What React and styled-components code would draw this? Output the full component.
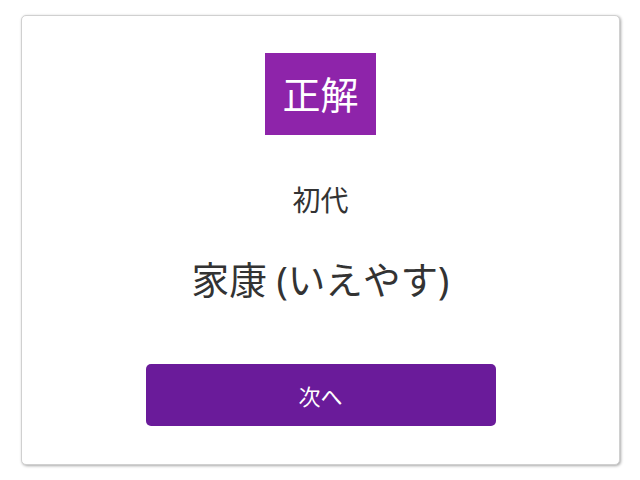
import React from "react";
import styled, { createGlobalStyle } from "styled-components";

const GlobalStyle = createGlobalStyle`
  body {
    margin: 0;
    background: #fff;
    font-family: "Noto Sans", "Noto Sans CJK JP", sans-serif;
  }
`;

const Card = styled.div`
  box-sizing: border-box;
  width: 599px;
  height: 450px;
  margin: 15px 21px;
  border: 1px solid #d0d0d0;
  border-radius: 5px;
  box-shadow: 1px 1px 3px rgba(0, 0, 0, 0.35);
  background: #fff;
  display: flex;
  flex-direction: column;
  align-items: center;
  padding-top: 37px;
`;

const Badge = styled.div`
  background: #8e24aa;
  color: #fff;
  height: 82px;
  line-height: 82px;
  padding: 0 17px;
  font-size: 38px;
`;

const Label = styled.div`
  margin-top: 45px;
  font-size: 28px;
  line-height: 40px;
  color: #333;
`;

const Answer = styled.div`
  margin-top: 34px;
  font-size: 37.6px;
  line-height: 52px;
  color: #333;
`;

const NextButton = styled.button`
  margin-top: 58px;
  width: 350px;
  height: 62px;
  border: none;
  border-radius: 5px;
  background: #6a1b9a;
  color: #fff;
  font-family: inherit;
  font-size: 22px;
  cursor: pointer;
`;

const App = () => {
  return (
    <>
      <GlobalStyle />
      <Card>
        <Badge>正解</Badge>
        <Label>初代</Label>
        <Answer>家康 (いえやす)</Answer>
        <NextButton>次へ</NextButton>
      </Card>
    </>
  );
};

export default App;
